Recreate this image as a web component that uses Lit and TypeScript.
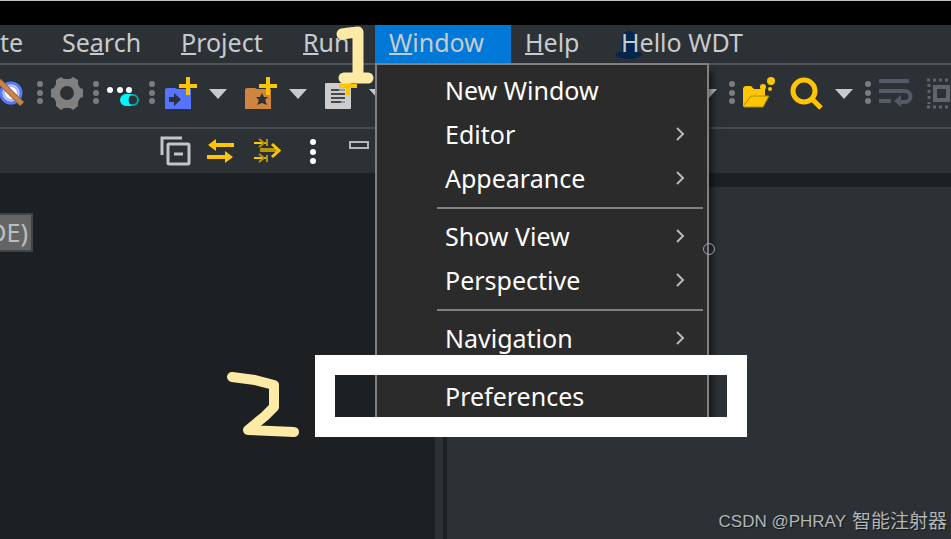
import { LitElement, html, svg, css, nothing } from "lit";
import { customElement } from "lit/decorators.js";
import { classMap } from "lit/directives/class-map.js";

type MenuBarItem = { before: string; key: string; after: string; open?: boolean; badge?: boolean };
type MenuRow = { label: string; submenu?: boolean } | null;

const MENU_BAR: MenuBarItem[] = [
  { before: "te", key: "", after: "" },
  { before: "Se", key: "a", after: "rch" },
  { before: "", key: "P", after: "roject" },
  { before: "", key: "R", after: "un" },
  { before: "", key: "W", after: "indow", open: true },
  { before: "", key: "H", after: "elp" },
  { before: "Hello WDT", key: "", after: "", badge: true },
];

const WINDOW_MENU: MenuRow[] = [
  { label: "New Window" },
  { label: "Editor", submenu: true },
  { label: "Appearance", submenu: true },
  null,
  { label: "Show View", submenu: true },
  { label: "Perspective", submenu: true },
  null,
  { label: "Navigation", submenu: true },
  null,
  { label: "Preferences" },
];

const plus = svg`<path d="M23 0h4v7h7v4h-7v7h-4v-7h-7v-4h7z" fill="#ffc500"/>`;

const ICONS = {
  noGlobe: svg`
    <circle cx="16" cy="16" r="10" fill="#fff" stroke="#5a78ff" stroke-width="3"/>
    <circle cx="16" cy="16" r="7" fill="none" stroke="#a9b8ff" stroke-width="2"/>
    <path d="M4 4L27 27" stroke="#7c6a70" stroke-width="6"/>
    <path d="M3 3L27 27" stroke="#cf8440" stroke-width="4"/>`,
  gear: svg`
    <path fill="#808080" fill-rule="evenodd" d="M10 0l3 2h6l3-2 5 3 0 4 2 4 3 1v8l-3 1-2 4v4l-5 4-3-2h-6l-3 2-5-4v-4l-2-4-3-1v-8l3-1 2-4V3zM16 9a7 7 0 1 0 0 14a7 7 0 1 0 0-14z"/>`,
  toggle: svg`
    <g fill="#fff"><circle cx="3" cy="13" r="3"/><circle cx="13" cy="13" r="3"/><circle cx="22" cy="13" r="3"/></g>
    <rect x="15" y="18" width="16" height="10" rx="5" fill="#2c3135" stroke="#00a9ad" stroke-width="2"/>
    <path d="M19 17h6a7 7 0 0 0 0 12h-6a6 6 0 0 1 0-12z" fill="#00f6fa"/>`,
  blueFolder: svg`
    <path d="M2 12l2-1h8l2 1h14v20H2z" fill="#5674ff"/>
    <path d="M6 20h5v-4l7 6.500-7 6.500v-4H6z" fill="#2c3135"/>${plus}`,
  orangeFolder: svg`
    <path d="M2 12l2-1h8l2 1h14v20H2z" fill="#cf8440"/>
    <path d="M19 16l2 4h4l-3 3 2 5-5-2-5 2 2-5-3-3h4z" fill="#2c3135"/>${plus}`,
  page: svg`
    <rect x="2" y="6" width="26" height="26" rx="1" fill="#cdcdcd"/>
    <path d="M8 13h8M8 17h14M8 21h14M8 25h10" stroke="#44484c" stroke-width="2"/>
    <path d="M16 13h6M18 25h4" stroke="#999" stroke-width="2"/>${plus}`,
  openFolder: svg`
    <path d="M0 29V11l2-2h6l3 3h11v7h4l-6 11H1z" fill="#ffc500"/>
    <path d="M1 28l7-9h18l-6 11H1" fill="none" stroke="#a09000" stroke-width="1"/>
    <g fill="#ffc500"><circle cx="28" cy="4" r="4"/><circle cx="20" cy="10" r="3"/><circle cx="27" cy="12" r="2"/></g>`,
  search: svg`
    <circle cx="15" cy="14" r="11" fill="none" stroke="#ffc500" stroke-width="5"/>
    <path d="M23 22L32 31" stroke="#ffc500" stroke-width="5"/>`,
  wrap: svg`
    <path d="M0 4h30M0 14h26a5 5 0 0 1 0 11h-5M0 24h12" fill="none" stroke="#555b66" stroke-width="4"/>
    <path d="M22 18v12l-7-6z" fill="#555b66"/>`,
  block: svg`
    <path d="M2 3h30M2 30h30M4 7v20" fill="none" stroke="#60656d" stroke-width="3" stroke-dasharray="3 3"/>
    <rect x="10" y="10" width="13" height="13" fill="none" stroke="#60656d" stroke-width="4"/>`,
  collapse: svg`
    <path d="M2 20V3h20" fill="none" stroke="#c3c6c8" stroke-width="3"/>
    <rect x="8" y="9" width="21" height="20" rx="1" fill="none" stroke="#c3c6c8" stroke-width="3"/>
    <path d="M14 19h9" stroke="#c3c6c8" stroke-width="3"/>`,
  swap: svg`
    <path d="M5 10h23M1 22h23" stroke="#ffc500" stroke-width="4"/>
    <path d="M2 10l8-6v12zM27 22l-8-6v12z" fill="#ffc500"/>`,
  merge: svg`
    <path d="M2 8h14M2 23h14" stroke="#ffc500" stroke-width="2"/>
    <path d="M7 4l5 4-5 4M7 19l5 4-5 4M15 4v7M15 20v7" fill="none" stroke="#b39208" stroke-width="2"/>
    <path d="M8 15h18" stroke="#b8960a" stroke-width="4"/>
    <path d="M20 9l7 6.500-7 6.500" fill="none" stroke="#ffc500" stroke-width="3"/>`,
  more: svg`<g fill="#fff"><circle cx="15" cy="7" r="3"/><circle cx="15" cy="17" r="3"/><circle cx="15" cy="26" r="3"/></g>`,
  minimize: svg`<rect x="6" y="7" width="18" height="6" fill="none" stroke="#b4b7ba" stroke-width="2"/>`,
};

const toolIcon = (name: keyof typeof ICONS, label: string) => html`
  <button class="tool" aria-label=${label}>
    <svg class="icon" viewBox="0 0 32 32" width="32" height="32" aria-hidden="true">${ICONS[name]}</svg>
  </button>`;

const caret = (label: string) => html`
  <button class="caret" aria-label=${label}>
    <svg viewBox="0 0 34 32" width="34" height="32" aria-hidden="true">
      <path d="M14 12h18l-9 10z" fill="#c8cbce"/>
    </svg>
  </button>`;

const handle = html`
  <svg class="handle" viewBox="0 0 24 32" width="24" height="32" aria-hidden="true">
    <g fill="#7c7c7c"><circle cx="13" cy="7" r="3"/><circle cx="13" cy="16" r="3"/><circle cx="13" cy="24" r="3"/></g>
  </svg>`;

@customElement("app-root")
export class AppRoot extends LitElement {
  static styles = css`
    :host {
      display: block;
      position: relative;
      min-height: 100vh;
      overflow: hidden;
      background: #1c2023;
      color: #c8cbce;
      font-family: "Noto Sans", "Noto Sans CJK SC", sans-serif;
      font-size: 25px;
    }
    .page {
      display: flex;
      flex-direction: column;
      min-height: 100vh;
    }
    button {
      border: 0;
      margin: 0;
      padding: 0;
      background: none;
      color: inherit;
      font: inherit;
      text-align: left;
      white-space: nowrap;
    }
    svg {
      display: block;
    }
    .icon {
      overflow: visible;
    }
    .title-strip {
      height: 24px;
      border-top: 1px solid #c0c0c0;
      background: #000;
    }
    .menu-bar {
      display: grid;
      grid-template-columns: 48px 119px 122px 86px 136px 96px 1fr;
      height: 38px;
      background: #2c3135;
      border-bottom: 2px solid #515457;
    }
    .menu-title {
      position: relative;
      padding: 0 0 4px 14px;
      line-height: 34px;
    }
    .menu-title:first-child {
      padding-left: 0;
    }
    .menu-title.open {
      background: #0078d7;
    }
    .menu-title .label {
      position: relative;
    }
    .key {
      text-decoration: underline;
      text-decoration-thickness: 2px;
      text-underline-offset: 1px;
      text-decoration-skip-ink: none;
    }
    .badge {
      position: absolute;
      left: 8px;
      top: 6px;
    }
    .tool-bar {
      display: flex;
      align-items: center;
      height: 62px;
      background: #2c3135;
      border-bottom: 2px solid #484c50;
    }
    .tool-group {
      display: flex;
      gap: 14px;
      padding-bottom: 6px;
    }
    .split {
      display: flex;
    }
    .tool-bar .handle {
      margin-bottom: 6px;
      flex: none;
    }
    .first-group {
      margin-left: -5px;
    }
    .covered {
      flex: 0 0 296px;
    }
    .view-bar {
      display: flex;
      align-items: center;
      gap: 14px;
      height: 44px;
      padding-left: 160px;
      background: #2c3135;
    }
    .work-area {
      display: grid;
      grid-template-columns: 435px 8px 4px 1fr;
      flex: 1;
    }
    .tree {
      padding-top: 40px;
      overflow: hidden;
    }
    .tree-item {
      display: flex;
      justify-content: flex-end;
      width: 28px;
      height: 35px;
      padding-right: 3px;
      border: 2px solid #404446;
      border-left: 0;
      background: #646464;
      color: #b9c0c4;
      line-height: 35px;
    }
    .sash {
      background: #2c3135;
    }
    .editor {
      grid-column: 4;
      margin-top: 14px;
      display: flex;
      align-items: flex-end;
      justify-content: flex-end;
      padding: 0 4px 3px;
      background: #2c3135;
    }
    .watermark {
      display: flex;
      gap: 6px;
      color: #b4b6b8;
      font: 17px/28px "Liberation Sans", "Noto Sans CJK SC", sans-serif;
      text-shadow: 1px 1px 1px #15181a;
    }
    .watermark .author {
      font-size: 19px;
    }
    .menu {
      position: absolute;
      left: 375px;
      top: 63px;
      width: 334px;
      box-sizing: border-box;
      padding: 2px 0;
      border: 2px solid #808080;
      background: #2b2b2b;
      color: #fff;
      box-shadow: 6px 6px 6px -2px rgba(0, 0, 0, 0.5);
    }
    .menu-row {
      display: flex;
      align-items: center;
      justify-content: space-between;
      width: 100%;
      height: 44px;
      padding: 2px 21px 0 68px;
    }
    .menu hr {
      height: 2px;
      margin: 8px 4px 4px 60px;
      border: 0;
      background: #808080;
    }
    .frame {
      position: absolute;
      left: 315px;
      top: 355px;
      width: 392px;
      height: 42px;
      border: 20px solid #fff;
    }
    .mark-one {
      position: absolute;
      left: 335px;
      top: 25px;
    }
    .mark-two {
      position: absolute;
      left: 225px;
      top: 368px;
    }
    .ring {
      position: absolute;
      left: 703px;
      top: 243px;
      width: 10px;
      height: 10px;
      border: 1px solid #a0a0b0;
      border-radius: 50%;
    }
  `;

  private renderTitle(item: MenuBarItem) {
    return html`
      <button class=${classMap({ "menu-title": true, open: !!item.open })}>
        ${item.badge
          ? html`<svg class="badge" viewBox="0 0 28 28" width="28" height="28" aria-hidden="true">
              <path d="M7 20V6q1-6 7-6t7 6v14q6 1 6 4-6 4-13 4T0 25q1-4 7-5z" fill="#04264d"/>
            </svg>`
          : nothing}
        <span class="label">${item.before}<span class="key">${item.key}</span>${item.after}</span>
      </button>`;
  }

  private renderRow(row: MenuRow) {
    if (!row) return html`<hr />`;
    return html`
      <button class="menu-row" role="menuitem">
        <span>${row.label}</span>
        ${row.submenu
          ? html`<svg viewBox="0 0 12 16" width="12" height="16" aria-hidden="true">
              <path d="M3 2l6 6-6 6" fill="none" stroke="#b8b8b8" stroke-width="2"/>
            </svg>`
          : nothing}
      </button>`;
  }

  render() {
    return html`
      <div class="page">
        <div class="title-strip"></div>
        <nav class="menu-bar">${MENU_BAR.map((item) => this.renderTitle(item))}</nav>
        <div class="tool-bar">
          <div class="tool-group first-group">${toolIcon("noGlobe", "Browser off")}</div>
          ${handle}
          <div class="tool-group">${toolIcon("gear", "Settings")}</div>
          ${handle}
          <div class="tool-group">${toolIcon("toggle", "Toggle")}</div>
          ${handle}
          <div class="tool-group">
            <div class="split">${toolIcon("blueFolder", "New project")}${caret("Project types")}</div>
            <div class="split">${toolIcon("orangeFolder", "New folder")}${caret("Folder types")}</div>
            <div class="split">${toolIcon("page", "New file")}${caret("File types")}</div>
          </div>
          <div class="covered"></div>
          <div class="tool-group">${caret("Run history")}</div>
          ${handle}
          <div class="tool-group">
            ${toolIcon("openFolder", "Open type")}
            <div class="split">${toolIcon("search", "Search")}${caret("Search types")}</div>
          </div>
          ${handle}
          <div class="tool-group">
            ${toolIcon("wrap", "Word wrap")} ${toolIcon("block", "Block selection")}
          </div>
        </div>
        <div class="view-bar">
          ${toolIcon("collapse", "Collapse all")} ${toolIcon("swap", "Link with editor")}
          ${toolIcon("merge", "Focus")} ${toolIcon("more", "View menu")}
          ${toolIcon("minimize", "Minimize")}
        </div>
        <main class="work-area">
          <section class="tree"><div class="tree-item">DE)</div></section>
          <div class="sash"></div>
          <section class="editor">
            <div class="watermark"><span>CSDN @PHRAY</span><span class="author">智能注射器</span></div>
          </section>
        </main>
      </div>
      <div class="menu" role="menu">${WINDOW_MENU.map((row) => this.renderRow(row))}</div>
      <div class="ring"></div>
      <div class="frame"></div>
      <svg class="mark-one" viewBox="0 0 40 60" width="40" height="60" role="img" aria-label="Step 1">
        <path d="M7 9L14 8L23 7V52M9 53H33" fill="none" stroke="#fdeaa5" stroke-width="11" stroke-linecap="round" stroke-linejoin="round"/>
      </svg>
      <svg class="mark-two" viewBox="0 0 80 74" width="80" height="74" role="img" aria-label="Step 2">
        <path d="M7 9L30 12L49 17V39L40 48L23 62L69 64" fill="none" stroke="#fdeaa5" stroke-width="10" stroke-linecap="round" stroke-linejoin="round"/>
      </svg>
    `;
  }
}
